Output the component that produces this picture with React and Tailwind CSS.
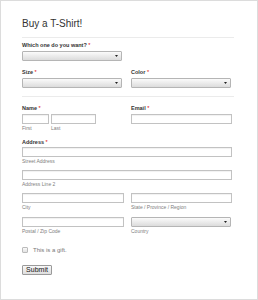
import React from 'react';

function Req() {
	return <span className="text-[#d00] font-normal"> *</span>;
}

function Label({ children, required }) {
	return (
		<div className="h-[7px] text-[5.5px] leading-[7px] font-bold text-[#333] whitespace-nowrap">
			{children}
			{required && <Req />}
		</div>
	);
}

function Sub({ children }) {
	return <div className="mt-[1px] h-[6px] text-[5px] leading-[6px] text-[#808080] whitespace-nowrap">{children}</div>;
}

function Select({ className = '' }) {
	return (
		<div
			className={`h-[10px] w-[100px] border border-[#b5b5b5] rounded-[1px] bg-gradient-to-b from-[#fbfbfb] to-[#dcdcdc] flex items-center justify-end pr-[3px] ${className}`}
		>
			<svg width="3" height="2" viewBox="0 0 3 2">
				<path d="M0 0H3L1.5 2Z" fill="#222" />
			</svg>
		</div>
	);
}

function Input({ className = '' }) {
	return <div className={`h-[10px] border border-[#c2c2c2] bg-white shadow-[inset_0_1px_1px_rgba(0,0,0,0.06)] ${className}`} />;
}

export default function App() {
	return (
		<div className="w-[258px] h-[300px] border border-[#dcdcdc] bg-white pl-[21px] pr-[23px] pt-[17px] font-['Liberation_Sans',Arial,sans-serif]">
			<h1 className="text-[10px] leading-[12px] text-[#333]">Buy a T-Shirt!</h1>
			<div className="mt-[7px] h-px bg-[#ebebeb]" />

			<div className="mt-[4px]">
				<Label required>Which one do you want?</Label>
				<Select className="mt-[2px]" />
			</div>

			<div className="mt-[8px] grid grid-cols-[102px_101px] gap-x-[7px]">
				<div>
					<Label required>Size</Label>
					<Select className="mt-[2px]" />
				</div>
				<div>
					<Label required>Color</Label>
					<Select className="mt-[2px]" />
				</div>
			</div>

			<div className="mt-[8px] h-px bg-[#ebebeb]" />

			<div className="mt-[8px] grid grid-cols-[102px_101px] gap-x-[7px]">
				<div>
					<Label required>Name</Label>
					<div className="mt-[2px] flex gap-[2px]">
						<div className="w-[27px]">
							<Input />
							<Sub>First</Sub>
						</div>
						<div className="w-[45px]">
							<Input />
							<Sub>Last</Sub>
						</div>
					</div>
				</div>
				<div>
					<Label required>Email</Label>
					<Input className="mt-[2px]" />
				</div>
			</div>

			<div className="mt-[8px]">
				<Label required>Address</Label>
				<Input className="mt-[1px] w-[210px]" />
				<Sub>Street Address</Sub>
				<Input className="mt-[6px] w-[210px]" />
				<Sub>Address Line 2</Sub>
			</div>

			<div className="mt-[6px] grid grid-cols-[102px_101px] gap-x-[7px] gap-y-[7px]">
				<div>
					<Input />
					<Sub>City</Sub>
				</div>
				<div>
					<Input />
					<Sub>State / Province / Region</Sub>
				</div>
				<div>
					<Input />
					<Sub>Postal / Zip Code</Sub>
				</div>
				<div>
					<Select />
					<div className="mt-[1px]">
						<Sub>Country</Sub>
					</div>
				</div>
			</div>

			<div className="mt-[13px] flex items-center gap-[5px] h-[6px]">
				<div className="w-[6px] h-[6px] border border-[#bbb] rounded-[1px] bg-gradient-to-b from-[#fafafa] to-[#e2e2e2]" />
				<span className="text-[6px] leading-[6px] font-normal text-[#777]">This is a gift.</span>
			</div>

			<button className="mt-[12px] h-[10px] w-[30px] border border-[#9a9a9a] rounded-[1px] bg-gradient-to-b from-[#f8f8f8] to-[#dedede] text-[7px] leading-[8px] font-normal text-[#111] flex items-center justify-center">
				Submit
			</button>
		</div>
	);
}
